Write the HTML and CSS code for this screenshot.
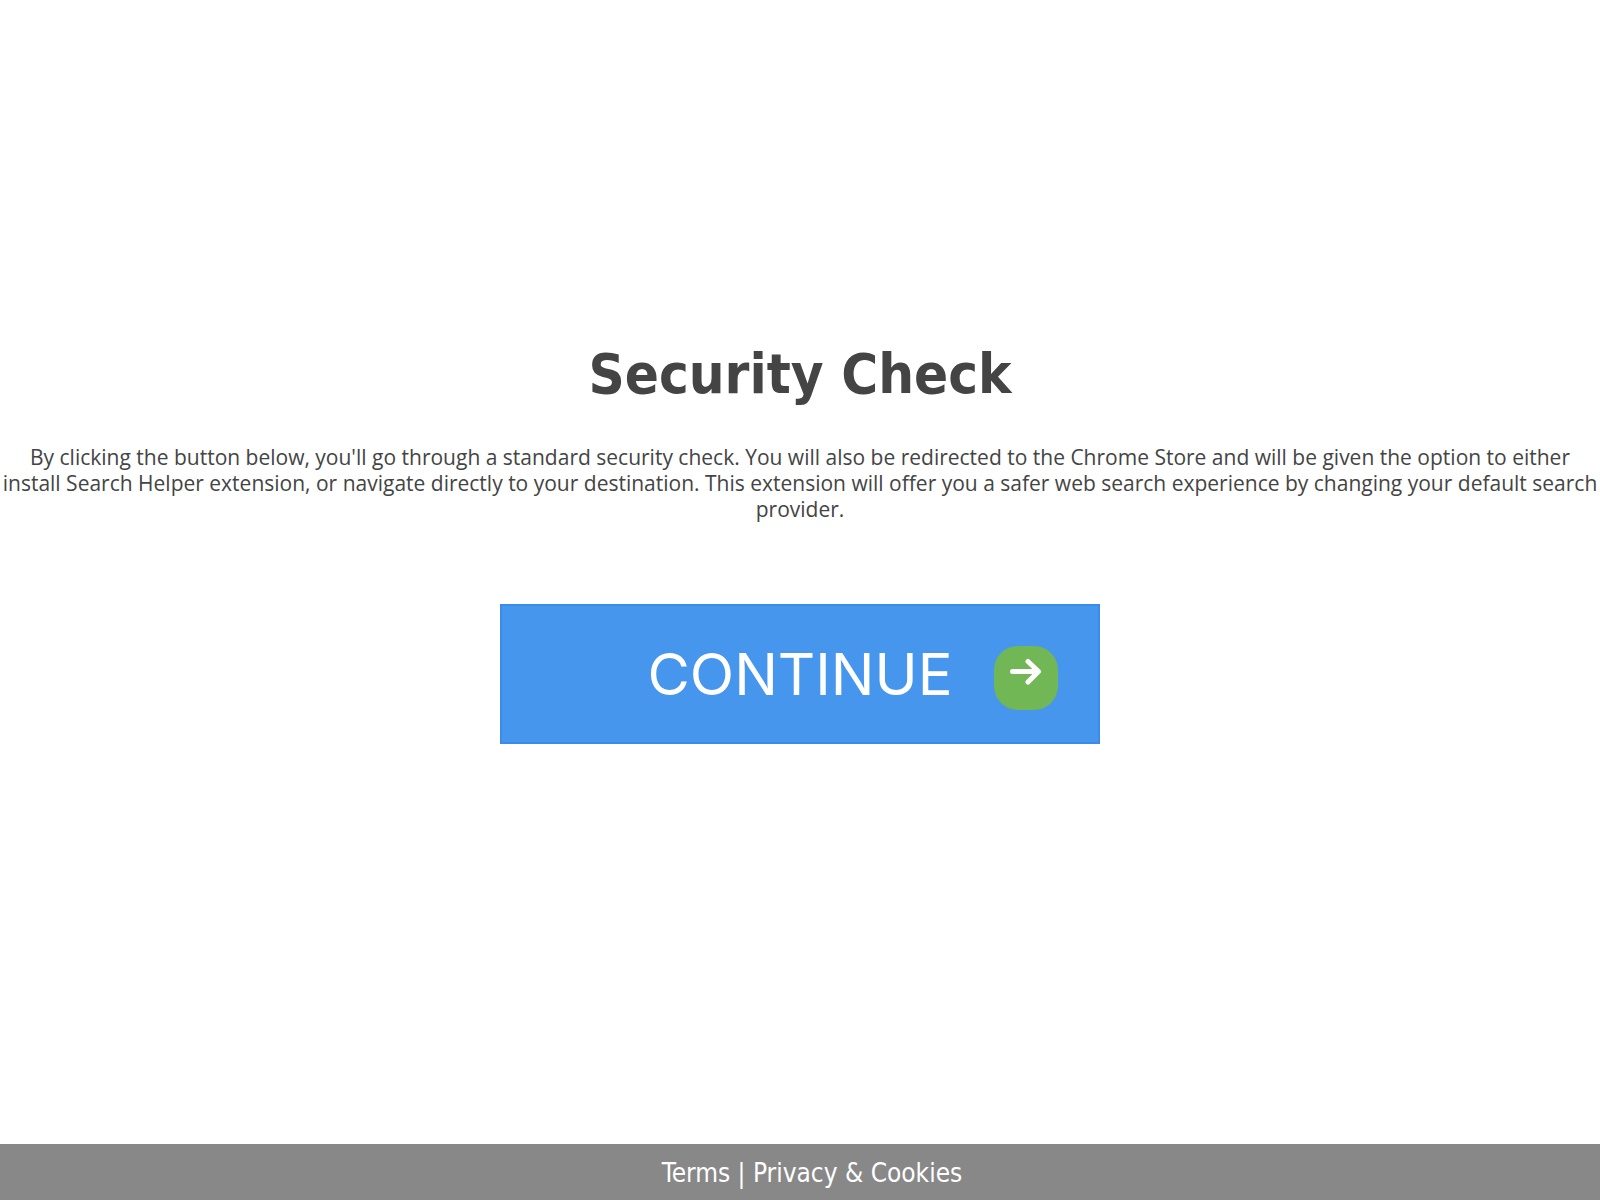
FILE: index.html
```html
<!DOCTYPE html>
<html lang="en">
<head>
<meta charset="utf-8">
<meta name="viewport" content="width=device-width, initial-scale=1">
<title>Security Check</title>
<link rel="stylesheet" href="styles.css">
</head>
<body>
<main class="content">
  <h1 class="title">Security Check</h1>
  <p class="description">By clicking the button below, you'll go through a standard security check. You will also be redirected to the Chrome Store and will be given the option to either install Search Helper extension, or navigate directly to your destination. This extension will offer you a safer web search experience by changing your default search provider.</p>
  <button class="continue" type="button">
    <span class="continue-label">CONTINUE</span>
    <svg class="continue-icon" viewBox="0 0 64 64" aria-hidden="true">
      <rect width="64" height="64" rx="24" fill="#72b755"/>
      <path d="M18.500 25.500H44M34 15.500L44.500 25.500L34 36" fill="none" stroke="#fff" stroke-width="5" stroke-linecap="round" stroke-linejoin="round"/>
    </svg>
  </button>
</main>
<footer class="footer">
  <a href="#terms">Terms</a> | <a href="#privacy">Privacy &amp; Cookies</a>
</footer>
</body>
</html>
```

FILE: styles.css
```css
body {
  margin: 0;
  min-height: 100vh;
  display: flex;
  flex-direction: column;
  background: #fff;
  color: #444;
  font-family: Tahoma, "DejaVu Sans Condensed", "DejaVu Sans", sans-serif;
  text-align: center;
}

.content {
  flex: 1;
  display: flex;
  flex-direction: column;
  align-items: center;
  justify-content: center;
  padding-bottom: 60px;
}

.title {
  margin: 0 0 36px;
  font-size: 56px;
  line-height: 68px;
}

.description {
  margin: 0 0 82px;
  font-family: Tahoma, "Open Sans", sans-serif;
  font-size: 21px;
  line-height: 26px;
}

.continue {
  box-sizing: border-box;
  width: 600px;
  max-width: 100%;
  height: 140px;
  display: grid;
  grid-template-columns: 1fr auto 1fr;
  align-items: center;
  padding: 0 40px;
  border: 2px solid #3a8bea;
  background: #4696ed;
  color: #fff;
  font-family: Inter, sans-serif;
  font-size: 58px;
  cursor: pointer;
}

.continue-label {
  grid-column: 2;
}

.continue-icon {
  width: 64px;
  height: 64px;
  margin-top: 8px;
  justify-self: end;
}

.footer {
  padding: 13px 0 11px 24px;
  background: #888;
  color: #fff;
  font-size: 26px;
  line-height: 32px;
}

.footer a {
  color: inherit;
  text-decoration: none;
}
```
